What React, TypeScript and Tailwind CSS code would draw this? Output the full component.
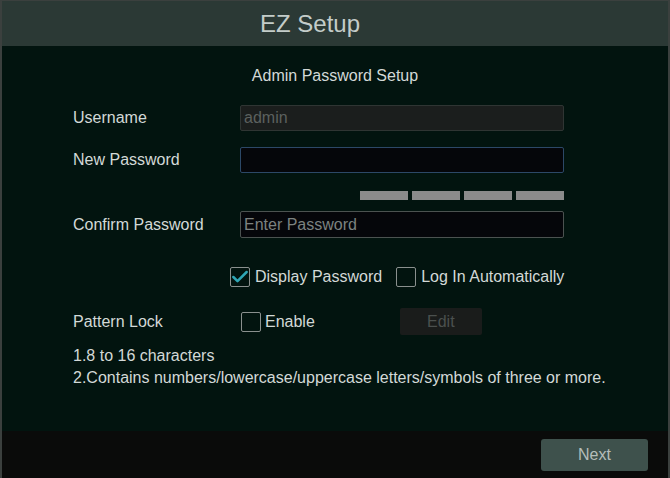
import { Check } from "lucide-react";

function Box({ checked }: { checked?: boolean }) {
  return (
    <span className="relative flex h-[20px] w-[20px] shrink-0 items-center justify-center rounded-[2px] border border-[#8a908e]">
      {checked && <Check size={20} strokeWidth={3} className="absolute text-[#2fa6b5]" />}
    </span>
  );
}

export default function App() {
  return (
    <div className="flex h-[478px] w-[670px] flex-col border-x-2 border-t border-[#3b403e] bg-[#02140f] font-['Liberation_Sans',Arial,sans-serif] text-[16px] text-[#d3d9d7]">
      <header className="flex h-[45px] shrink-0 items-center justify-center bg-[#2b3935] pr-[50px] text-[24px] text-[#c3ccc9]">
        EZ Setup
      </header>

      <main className="flex flex-1 flex-col pl-[71px] pt-[18px]">
        <div className="w-[524px] text-center">Admin Password Setup</div>

        <div className="mt-[17px] flex h-[26px] items-center">
          <span className="w-[167px]">Username</span>
          <div className="flex h-[26px] w-[324px] items-center rounded-[2px] border border-[#2f3533] bg-[#1b1e1d] px-[3px] text-[#5b615f]">
            admin
          </div>
        </div>

        <div className="mt-[16px] flex h-[26px] items-center">
          <span className="w-[167px]">New Password</span>
          <div className="h-[26px] w-[324px] rounded-[2px] border border-[#2c4867] bg-[#05060a]" />
        </div>

        <div className="mt-[18px] flex h-[9px] w-[491px] justify-end gap-[4px]">
          {[0, 1, 2, 3].map((i) => (
            <span key={i} className="w-[48px] bg-[#8b8b8b]" />
          ))}
        </div>

        <div className="mt-[11px] flex h-[27px] items-center">
          <span className="w-[167px]">Confirm Password</span>
          <div className="flex h-[27px] w-[324px] items-center rounded-[2px] border border-[#4b5250] bg-[#05060a] px-[3px] text-[#7c8280]">
            Enter Password
          </div>
        </div>

        <div className="mt-[27px] flex items-center pl-[157px]">
          <Box checked />
          <span className="ml-[5px]">Display Password</span>
          <span className="ml-[14px]">
            <Box />
          </span>
          <span className="ml-[5px]">Log In Automatically</span>
        </div>

        <div className="mt-[19px] flex items-center">
          <span className="w-[168px]">Pattern Lock</span>
          <Box />
          <span className="ml-[4px]">Enable</span>
          <div className="ml-[85px] flex h-[27px] w-[82px] items-center justify-center rounded-[2px] bg-[#1a1c1b] text-[#4b504e]">
            Edit
          </div>
        </div>

        <div className="mt-[10px] leading-[22px]">
          <div>1.8 to 16 characters</div>
          <div>2.Contains numbers/lowercase/uppercase letters/symbols of three or more.</div>
        </div>
      </main>

      <footer className="flex h-[47px] shrink-0 items-center justify-end bg-[#0a0b0a] pr-[20px]">
        <button className="h-[32px] w-[107px] rounded-[3px] bg-[#3e514c] text-[16px] text-[#b5bdba]">Next</button>
      </footer>
    </div>
  );
}
